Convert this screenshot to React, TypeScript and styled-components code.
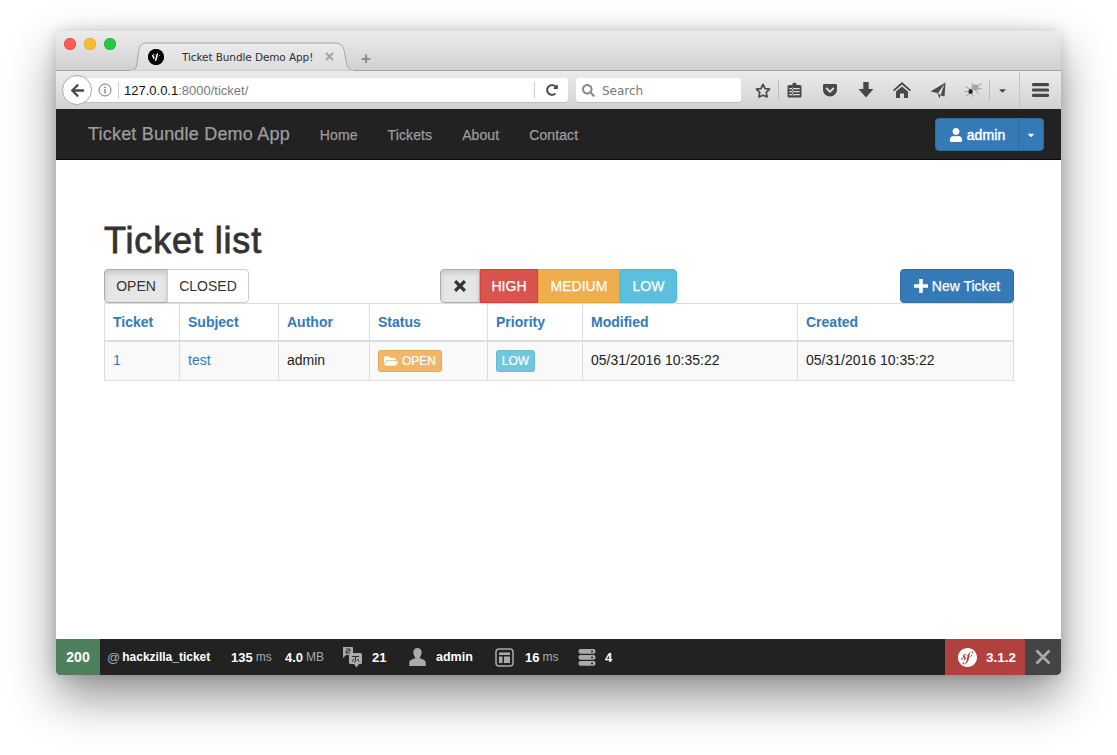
import React from 'react';
import styled, { createGlobalStyle } from 'styled-components';
import { SiSymfony } from 'react-icons/si';
import { FaGetPocket, FaUser, FaFolderOpen, FaArrowLeft, FaSearch, FaRedoAlt, FaCaretDown } from 'react-icons/fa';

const Global = createGlobalStyle`
  html, body { margin: 0; padding: 0; background: #fff; height: 100%; overflow: hidden; }
  body { font-family: "Liberation Sans", Arial, sans-serif; font-size: 14px; color: #222; }
`;

const Page = styled.div`
  width: 1117px; height: 755px; padding: 31px 0 0 56px; box-sizing: border-box; background: #fff; overflow: hidden;
`;
const Win = styled.div`
  width: 1005px; height: 644px; display: flex; flex-direction: column; background: #fff;
  border-radius: 5px; overflow: hidden;
  box-shadow: 0 22px 48px rgba(0,0,0,.44), 0 0 14px rgba(0,0,0,.16);
`;

const TitleBar = styled.div`
  height: 40px; box-sizing: border-box; flex: none; display: flex; align-items: flex-end;
  background: linear-gradient(#ececec, #d0d0d0); border-bottom: 1px solid #a3a3a3; position: relative;
`;
const Lights = styled.div`display: flex; gap: 8px; padding: 0 0 20px 8px; width: 74px; box-sizing: border-box;`;
const Light = styled.span<{ $c: string; $b: string }>`
  width: 12px; height: 12px; border-radius: 50%; background: ${p => p.$c}; box-shadow: inset 0 0 0 .5px ${p => p.$b};
`;
const Tab = styled.div`
  width: 224px; height: 29px; margin-bottom: -1px; position: relative; display: flex; align-items: center; box-sizing: border-box; padding: 1px 0 1px 18px; flex: none;
`;
const TabShape = styled.svg`position: absolute; left: 0; top: 0; width: 224px; height: 29px;`;
const Favicon = styled(SiSymfony)`position: relative; width: 16px; height: 16px; color: #000; background: radial-gradient(#fff 35%, #000 36%); border-radius: 50%;`;
const TabTitle = styled.span`
  position: relative; margin-left: 18px; font: 10.5px "DejaVu Sans", sans-serif; color: #303030; width: 143px; white-space: nowrap; letter-spacing: -.1px;
`;
const TabClose = styled.svg`position: relative; width: 9px; height: 9px; color: #a8a8a8;`;
const NewTab = styled.span`margin: 0 0 1px 7px; font: 700 17px "Liberation Sans", sans-serif; color: #888; line-height: 20px;`;

const NavBar = styled.div`
  height: 38px; flex: none; box-sizing: border-box; display: flex; align-items: center; position: relative;
  background: linear-gradient(#ebebeb, #d2d2d2); padding: 0 0 0 6px;
`;
const BackBtn = styled.div`
  width: 30px; height: 30px; border-radius: 50%; border: 1px solid #aaa; background: #fff; display: flex; align-items: center; justify-content: center; z-index: 1; flex: none; color: #4a4a4a; box-sizing: border-box; font-size: 15px;
`;
const UrlBar = styled.div`
  width: 492px; height: 24px; margin-left: -16px; padding-left: 22px; box-sizing: border-box; background: #fff; border-radius: 0 3px 3px 0; display: flex; align-items: center; flex: none;
  box-shadow: 0 1px 0 #bdbdbd;
`;
const InfoIcon = styled.svg`width: 14px; height: 14px; margin-right: 6px; flex: none;`;
const UrlText = styled.div`
  border-left: 1px solid #ccc; padding-left: 5px; font: 13px/17px "Liberation Sans", sans-serif; color: #777; flex: 1; height: 17px;
  b { font-weight: 400; color: #111; }
`;
const ReloadBox = styled.div`
  border-left: 1px solid #ccc; height: 16px; width: 33px; display: flex; align-items: center; justify-content: center; color: #444; font-size: 12px; flex: none;
`;
const SearchBox = styled.div`
  width: 165px; height: 24px; margin-left: 8px; background: #fff; border-radius: 3px; box-shadow: 0 1px 0 #bdbdbd; display: flex; align-items: center; padding: 1px 0 0 6px; box-sizing: border-box; font: 12px "DejaVu Sans", sans-serif; color: #777; flex: none; gap: 7px;
  svg { color: #8a8a8a; font-size: 13px; }
`;
const ToolIcons = styled.div`display: flex; align-items: center; position: relative; margin-left: 14px; flex: none; height: 100%; color: #484848;`;
const ToolSlot = styled.span<{ $w: number; $sep?: boolean; $ml?: number }>`
  width: ${p => p.$w}px; height: 20px; display: flex; align-items: center; justify-content: center; flex: none; box-sizing: border-box;
  margin-left: ${p => p.$ml ?? 0}px;
  ${p => p.$sep ? 'border-left: 1px solid #bbb;' : ''}
`;
const WideSep = styled.span`width: 1px; height: 36px; background: #c4c4c4; flex: none; margin-left: 5px;`;

const TopNav = styled.nav`
  height: 51px; flex: none; box-sizing: border-box; background: #222; border-bottom: 1px solid #080808; display: flex; align-items: center; padding: 1px 17px 0 32px;
`;
const Brand = styled.a`font-size: 18px; color: #9d9d9d; margin-right: 30px; -webkit-text-stroke: .25px #9d9d9d; letter-spacing: .2px;`;
const NavLink = styled.a`font-size: 14px; color: #9d9d9d; margin-right: 30px; -webkit-text-stroke: .25px #9d9d9d; letter-spacing: .1px;`;
const NavSpacer = styled.div`flex: 1;`;
const UserGroup = styled.div`display: flex; height: 33px; color: #fff; background: #337ab7; border-radius: 4px; border: 1px solid #2e6da4; box-sizing: border-box;`;
const UserMain = styled.div`width: 82px; display: flex; align-items: center; justify-content: center; gap: 4px; font-size: 14px; border-right: 1px solid #2e6da4; -webkit-text-stroke: .45px #fff; letter-spacing: .1px; svg { font-size: 14px; -webkit-text-stroke: 0; }`;
const UserCaret = styled.div`width: 24px; display: flex; align-items: center; justify-content: center; font-size: 10px; color: #fff;`;

const Main = styled.main`flex: 1; padding: 0 47px 0 48px; min-height: 0;`;
const Title = styled.h1`
  margin: 61px 0 8px; font-size: 36px; line-height: 40px; font-weight: 400; color: #333; -webkit-text-stroke: .8px #333; letter-spacing: .85px;
`;
const Controls = styled.div`display: grid; grid-template-columns: 336px auto 1fr; height: 34px; align-items: stretch;`;
const Group = styled.div`display: flex;`;
const GroupRight = styled.div`display: flex; justify-content: flex-end;`;
const Btn = styled.button<{ $bg: string; $bd: string; $fg: string; $w: number; $inset?: boolean; $first?: boolean; $last?: boolean }>`
  width: ${p => p.$w}px; height: 34px; box-sizing: border-box; padding: 0; margin: 0; font: 14px "Liberation Sans", sans-serif;
  background: ${p => p.$bg}; color: ${p => p.$fg}; border: 1px solid ${p => p.$bd};
  ${p => p.$first ? 'border-radius: 4px 0 0 4px;' : ''}
  ${p => p.$last ? 'border-radius: 0 4px 4px 0;' : ''}
  ${p => p.$inset ? 'box-shadow: inset 0 3px 5px rgba(0,0,0,.125);' : ''}
  ${p => p.$fg === '#fff' ? '-webkit-text-stroke: .25px #fff;' : ''}
  display: flex; align-items: center; justify-content: center; gap: 4px;
`;
const NewBtn = styled(Btn)`border-radius: 4px;`;
const ClosedBtn = styled(Btn)`margin-left: -1px;`;

const Table = styled.table`
  width: 909px; border-collapse: collapse; table-layout: fixed; font-size: 14px; color: #222;
`;
const Th = styled.th`
  border: 1px solid #ddd; border-bottom: 2px solid #ddd; height: 37px; padding: 0 8px; box-sizing: border-box; text-align: left; font-weight: 700; color: #337ab7;
`;
const Td = styled.td`
  border: 1px solid #ddd; height: 40px; padding: 0 8px 2px; background: #f9f9f9; color: #222; box-sizing: border-box;
`;
const TLink = styled.a`color: #337ab7;`;
const Label = styled.span<{ $bg: string; $w: number }>`
  display: inline-flex; align-items: center; justify-content: center; gap: 4px; width: ${p => p.$w}px; height: 22px; box-sizing: border-box; margin-top: 2px; vertical-align: middle;
  background: ${p => p.$bg}; border-radius: 3px; color: #fff; font-size: 12px; -webkit-text-stroke: .2px #fff; border: 1px solid rgba(0,0,0,.06);
  svg { font-size: 14px; }
`;

const Debug = styled.footer`
  height: 36px; flex: none; background: #222; display: flex; align-items: center; color: #fff; font-size: 12px; font-weight: 700; box-sizing: border-box;
`;
const Status = styled.div`width: 44px; height: 100%; background: #4f805d; display: flex; align-items: center; justify-content: center; font-size: 14px; flex: none;`;
const Seg = styled.span<{ $w: number; $pl?: number; $fs?: number }>`
  width: ${p => p.$w}px; padding-left: ${p => p.$pl ?? 0}px; box-sizing: border-box; flex: none; display: flex; align-items: center; white-space: nowrap; font-size: ${p => p.$fs ?? 13}px;
`;
const Dim = styled.span`color: #aaa; font-weight: 400; font-size: 12px; margin-left: 3px;`;
const At = styled.span`color: #aaa; font-weight: 400; margin-right: 2px; font-size: 13px;`;
const DbgIcon = styled.svg`flex: none; color: #aaa;`;
const SegValue = styled.span<{ $ml: number }>`margin-left: ${p => p.$ml}px;`;
const DbgSpacer = styled.div`flex: 1;`;
const Version = styled.div`width: 80px; height: 100%; background: #b0413e; display: flex; align-items: center; gap: 9px; padding-left: 13px; box-sizing: border-box; font-size: 13.5px; flex: none; svg { font-size: 19px; color: #fff; }`;
const CloseBar = styled.div`width: 36px; height: 100%; background: #444; display: flex; align-items: center; justify-content: center; flex: none;`;

const StarIcon = () => (
  <svg width="18" height="17" viewBox="0 0 18 17"><path d="M9 1.600l2.300 4.700 5.100.7-3.700 3.600.9 5.100L9 13.800l-4.600 2 .9-5.200L1.600 7l5.100-.7z" fill="none" stroke="#484848" strokeWidth="1.900" strokeLinejoin="round" /></svg>
);
const ClipIcon = () => (
  <svg width="15" height="16" viewBox="0 0 15 16"><path d="M2 3h3.500V1.600L7.500.5l2 1.100V3H13a1.500 1.500 0 0 1 1.500 1.500V14a1.500 1.500 0 0 1-1.500 1.500H2A1.500 1.500 0 0 1 .5 14V4.500A1.500 1.500 0 0 1 2 3z" fill="#484848"/><path d="M2.300 6h10.400v1.300H2.300zM2.300 9h10.400v1.300H2.300zM2.300 12h10.400v1.300H2.300zM5 5.500v8.200h.9V5.500z" fill="#ddd"/></svg>
);
const DownIcon = () => (
  <svg width="16" height="16" viewBox="0 0 16 16"><path d="M5.300 0h5.400v7H15.500L8 15.500.5 7h4.800z" fill="#484848"/></svg>
);
const HomeIcon = () => (
  <svg width="18" height="16" viewBox="0 0 18 16"><path d="M9 0 18 8l-1.200 1.300L9 2.600 1.200 9.300 0 8z" fill="#484848"/><path d="M9 4.500l6 5V16h-4v-4.500H7V16H3V9.500z" fill="#484848"/></svg>
);
const PlaneIcon = () => (
  <svg width="16" height="17" viewBox="0 0 16 17"><path d="M15.500.5 14.500 14.500 10.500 13.200 9.500 16.500 7.500 11 .5 9.500z" fill="#484848"/><path d="M14.500 2 8 11l2.500 2.200z" fill="#ddd"/></svg>
);
const SpiderIcon = () => (
  <svg width="19" height="16" viewBox="0 0 19 16" fill="none" stroke="#9a9a9a" strokeWidth=".9"><ellipse cx="6.500" cy="9.500" rx="2.200" ry="2.600" fill="#222" stroke="none"/><ellipse cx="11" cy="5.500" rx="3.600" ry="3" fill="#a5a5a5" stroke="none"/><path d="M6 7 1.500 5M5 9.500H.5M5.500 11.500 2 14M8 11l1 4M13 7.500l5-1M13 4l5-2.500M9 3.500 8 .8M11 8l4 4"/></svg>
);
const BarsIcon = () => (
  <svg width="17" height="14" viewBox="0 0 17 14"><rect x="0" y="0" width="17" height="3.200" rx="1.200" fill="#484848"/><rect x="0" y="5.400" width="17" height="3.200" rx="1.200" fill="#484848"/><rect x="0" y="10.800" width="17" height="3.200" rx="1.200" fill="#484848"/></svg>
);
const PlusIcon = () => (
  <svg width="14" height="14" viewBox="0 0 14 14"><path d="M5.200 0h3.600v5.200H14v3.600H8.800V14H5.200V8.800H0V5.200h5.200z" fill="currentColor"/></svg>
);
const RemoveIcon = () => (
  <svg width="14" height="14" viewBox="0 0 14 14"><path d="M2 3.800 3.800 2 7 5.200 10.200 2 12 3.800 8.800 7 12 10.200 10.200 12 7 8.800 3.800 12 2 10.200 5.200 7z" transform="translate(7 7) scale(1.150) translate(-7 -7)" fill="currentColor" stroke="currentColor" strokeWidth=".5"/></svg>
);
const TranslateIcon = () => (
  <DbgIcon width="21" height="22" viewBox="0 0 21 22"><path d="M1 1h9a1 1 0 0 1 1 1v6a1 1 0 0 1-1 1H4L1 12z" fill="#aaa"/><rect x="7" y="7" width="13" height="11" rx="1.500" fill="#aaa"/><path d="M12 18h5l-2.500 3.500z" fill="#aaa"/><path d="M10 10.500h7M13.500 10.500v5l-1.500 1M15.500 13l1.500 2.500M11.500 13l-1 2.500" stroke="#222" strokeWidth=".9" fill="none"/><path d="M4 3h4v2H4v2h4" stroke="#222" strokeWidth=".9" fill="none"/></DbgIcon>
);
const PersonIcon = () => (
  <DbgIcon width="17" height="18" viewBox="0 0 17 18"><path d="M8.500 0c2.600 0 4.200 2 4.200 4.500S11 9 10.600 10c2.500 1.200 6.100 1.800 6.100 4.500V18H.3v-3.500C.3 11.800 4 11.200 6.400 10 6 9 4.300 7 4.300 4.500S5.900 0 8.500 0z" fill="#aaa"/></DbgIcon>
);
const LayoutIcon = () => (
  <DbgIcon width="19" height="19" viewBox="0 0 19 19" fill="none"><rect x="1" y="1" width="17" height="17" rx="3" stroke="#aaa" strokeWidth="1.500"/><path d="M4 4.500h11V7H4zM4 8.500h3.500V15H4zM9 8.500h6V15H9z" fill="#aaa"/></DbgIcon>
);
const DbIcon = () => (
  <DbgIcon width="18" height="17" viewBox="0 0 18 17"><rect x=".5" y="0" width="17" height="4.800" rx="2" fill="#aaa"/><rect x=".5" y="6" width="17" height="4.800" rx="2" fill="#aaa"/><rect x=".5" y="12" width="17" height="4.800" rx="2" fill="#aaa"/><circle cx="14" cy="2.400" r="1" fill="#222"/><circle cx="14" cy="8.400" r="1" fill="#222"/><circle cx="14" cy="14.400" r="1" fill="#222"/></DbgIcon>
);

export default function App() {
  return (
    <Page>
      <Global />
      <Win>
        <TitleBar>
          <Lights>
            <Light $c="#fc5b57" $b="#e2463f" />
            <Light $c="#febb2e" $b="#dfa023" />
            <Light $c="#27c83f" $b="#1dad2b" />
          </Lights>
          <Tab>
            <TabShape viewBox="0 0 224 29">
              <defs>
                <linearGradient id="tabfill" x1="0" y1="0" x2="0" y2="1"><stop offset="0" stopColor="#ebebeb" /><stop offset="1" stopColor="#dcdcdc" /></linearGradient>
              </defs>
              <path d="M0 28.500C6 28.500 6.500 26 8 14 9 6 10 1 16 1L205 1C212 1 214 6 215 13 217 25 218 28.500 224 28.500Z" fill="url(#tabfill)" stroke="#a3a3a3" strokeWidth="1" />
              <path d="M.5 29h223" stroke="#dcdcdc" strokeWidth="1.500" />
            </TabShape>
            <Favicon />
            <TabTitle>Ticket Bundle Demo App!</TabTitle>
            <TabClose viewBox="0 0 9 9"><path d="M1 1l7 7M8 1 1 8" stroke="currentColor" strokeWidth="2.200" /></TabClose>
          </Tab>
          <NewTab>+</NewTab>
        </TitleBar>
        <NavBar>
          <BackBtn><FaArrowLeft /></BackBtn>
          <UrlBar>
            <InfoIcon viewBox="0 0 14 14" fill="none"><circle cx="7" cy="7" r="6" stroke="#777" /><path d="M7 6v4.500M7 3.500v1.500" stroke="#777" strokeWidth="1.300" /></InfoIcon>
            <UrlText><b>127.0.0.1</b>:8000/ticket/</UrlText>
            <ReloadBox><FaRedoAlt /></ReloadBox>
          </UrlBar>
          <SearchBox><FaSearch />Search</SearchBox>
          <ToolIcons>
            <ToolSlot $w={16}><StarIcon /></ToolSlot>
            <ToolSlot $w={0} $ml={7} $sep />
            <ToolSlot $w={30}><ClipIcon /></ToolSlot>
            <ToolSlot $w={42}><FaGetPocket size={16} /></ToolSlot>
            <ToolSlot $w={30}><DownIcon /></ToolSlot>
            <ToolSlot $w={42}><HomeIcon /></ToolSlot>
            <ToolSlot $w={30}><PlaneIcon /></ToolSlot>
            <ToolSlot $w={32} $ml={4}><SpiderIcon /></ToolSlot>
            <ToolSlot $w={1} $sep />
            <ToolSlot $w={24}><FaCaretDown size={11} /></ToolSlot>
            <WideSep />
            <ToolSlot $w={40}><BarsIcon /></ToolSlot>
          </ToolIcons>
        </NavBar>
        <TopNav>
          <Brand>Ticket Bundle Demo App</Brand>
          <NavLink>Home</NavLink>
          <NavLink>Tickets</NavLink>
          <NavLink>About</NavLink>
          <NavLink>Contact</NavLink>
          <NavSpacer />
          <UserGroup>
            <UserMain><FaUser />admin</UserMain>
            <UserCaret><FaCaretDown /></UserCaret>
          </UserGroup>
        </TopNav>
        <Main>
          <Title>Ticket list</Title>
          <Controls>
            <Group>
              <Btn $w={64} $first $inset $bg="#e6e6e6" $bd="#adadad" $fg="#333">OPEN</Btn>
              <ClosedBtn $w={82} $last $bg="#fff" $bd="#ccc" $fg="#333">CLOSED</ClosedBtn>
            </Group>
            <Group>
              <Btn $w={40} $first $inset $bg="#e6e6e6" $bd="#adadad" $fg="#333"><RemoveIcon /></Btn>
              <Btn $w={58} $bg="#d9534f" $bd="#d43f3a" $fg="#fff">HIGH</Btn>
              <Btn $w={82} $bg="#f0ad4e" $bd="#eea236" $fg="#fff">MEDIUM</Btn>
              <Btn $w={57} $last $bg="#5bc0de" $bd="#46b8da" $fg="#fff">LOW</Btn>
            </Group>
            <GroupRight>
              <NewBtn $w={114} $bg="#337ab7" $bd="#2e6da4" $fg="#fff"><PlusIcon />New Ticket</NewBtn>
            </GroupRight>
          </Controls>
          <Table>
            <colgroup>
              <col width="75" /><col width="99" /><col width="91" /><col width="118" /><col width="95" /><col width="215" /><col width="216" />
            </colgroup>
            <thead>
              <tr>
                <Th>Ticket</Th><Th>Subject</Th><Th>Author</Th><Th>Status</Th><Th>Priority</Th><Th>Modified</Th><Th>Created</Th>
              </tr>
            </thead>
            <tbody>
              <tr>
                <Td><TLink>1</TLink></Td>
                <Td><TLink>test</TLink></Td>
                <Td>admin</Td>
                <Td><Label $bg="#f2b666" $w={64}><FaFolderOpen />OPEN</Label></Td>
                <Td><Label $bg="#73c6e0" $w={39}>LOW</Label></Td>
                <Td>05/31/2016 10:35:22</Td>
                <Td>05/31/2016 10:35:22</Td>
              </tr>
            </tbody>
          </Table>
        </Main>
        <Debug>
          <Status>200</Status>
          <Seg $w={131} $pl={7} $fs={12}><At>@</At>hackzilla_ticket</Seg>
          <Seg $w={54}>135<Dim>ms</Dim></Seg>
          <Seg $w={57}>4.0<Dim>MB</Dim></Seg>
          <Seg $w={67}><TranslateIcon /><SegValue $ml={9}>21</SegValue></Seg>
          <Seg $w={86} $fs={12.5}><PersonIcon /><SegValue $ml={10}>admin</SegValue></Seg>
          <Seg $w={83}><LayoutIcon /><SegValue $ml={11}>16</SegValue><Dim>ms</Dim></Seg>
          <Seg $w={50}><DbIcon /><SegValue $ml={9}>4</SegValue></Seg>
          <DbgSpacer />
          <Version><SiSymfony />3.1.2</Version>
          <CloseBar><svg width="16" height="16" viewBox="0 0 16 16"><path d="M1.500 1.500l13 13M14.500 1.500l-13 13" stroke="#aaa" strokeWidth="2.800" /></svg></CloseBar>
        </Debug>
      </Win>
    </Page>
  );
}
